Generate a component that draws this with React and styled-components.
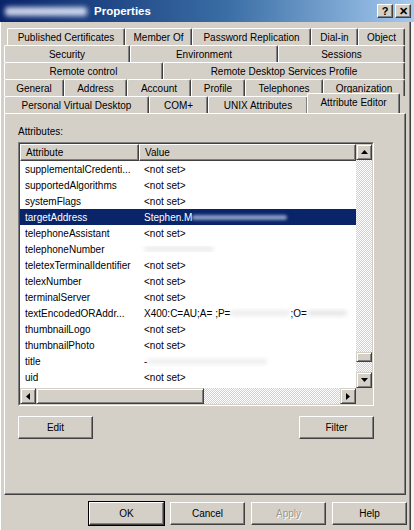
import React from 'react';
import styled, { createGlobalStyle } from 'styled-components';

const GlobalStyle = createGlobalStyle`
  html, body {
    margin: 0;
    padding: 0;
    background: #f4f3ef;
  }
  body {
    font-family: 'Liberation Sans', Arial, sans-serif;
    font-size: 10px;
    color: #000;
  }
`;

const Frame = styled.div`
  width: 414px;
  height: 530px;
  display: flex;
  flex-direction: column;
  overflow: hidden;
`;

const TitleBar = styled.div`
  height: 22px;
  flex: none;
  display: flex;
  align-items: center;
  padding: 0 3px 0 5px;
  background: linear-gradient(to right, #0a246a 0%, #3a6ea5 55%, #a6caf0 100%);
  color: #fff;
`;

const Smudge = styled.span`
  display: inline-block;
  width: ${(p) => p.w}px;
  height: ${(p) => p.h || 8}px;
  background: ${(p) => p.tone || 'rgba(255,255,255,0.75)'};
  filter: blur(${(p) => p.blur || 2}px);
  vertical-align: middle;
  border-radius: 3px;
`;

const TitleText = styled.span`
  font-size: 11.5px;
  font-weight: bold;
  margin-left: 7px;
  flex: 1;
`;

const CaptionButton = styled.div`
  width: 16px;
  height: 14px;
  box-sizing: border-box;
  background: #d4d0c8;
  border: 1px solid;
  border-color: #fff #404040 #404040 #fff;
  box-shadow: inset -1px -1px 0 #808080;
  color: #000;
  font-weight: bold;
  font-size: 11px;
  line-height: 12px;
  text-align: center;
  margin-left: ${(p) => (p.gap ? 2 : 0)}px;
`;

const Body = styled.div`
  flex: 1;
  width: 411px;
  box-sizing: border-box;
  background: #d4d0c8;
  border-right: 1px solid #404040;
  box-shadow: inset -1px 0 0 #808080, inset 1px 0 0 #fff;
  display: flex;
  flex-direction: column;
  padding: 6px 0 0 0;
`;

const TabStrip = styled.div`
  display: flex;
  flex-direction: column;
  padding: 0 4px;
  position: relative;
  z-index: 1;
`;

const TabRow = styled.div`
  display: flex;
  height: 17px;
  padding-left: ${(p) => p.indent || 0}px;
`;

const Tab = styled.div`
  width: ${(p) => p.w}px;
  flex: none;
  box-sizing: border-box;
  height: ${(p) => (p.active ? 20 : 17)}px;
  margin-top: ${(p) => (p.active ? -3 : 0)}px;
  margin-left: ${(p) => (p.active ? -1 : 0)}px;
  border-top: 1px solid #fff;
  border-left: 1px solid #fff;
  border-right: 1px solid #404040;
  box-shadow: inset -1px 0 0 #808080;
  border-radius: 2px 2px 0 0;
  background: #d4d0c8;
  display: flex;
  align-items: center;
  justify-content: center;
  white-space: nowrap;
  padding-bottom: ${(p) => (p.active ? 3 : 0)}px;
  position: relative;
  z-index: ${(p) => (p.active ? 2 : 0)};
`;

const Panel = styled.div`
  height: 382px;
  margin: 0 4px 0 4px;
  box-sizing: border-box;
  border: 1px solid;
  border-color: #fff #404040 #404040 #fff;
  box-shadow: inset -1px -1px 0 #808080;
  padding: 12px 0 0 13px;
  display: flex;
  flex-direction: column;
`;

const Label = styled.div`
  height: 13px;
  margin-bottom: 3px;
`;

const ListBox = styled.div`
  width: 356px;
  height: 264px;
  box-sizing: border-box;
  border: 1px solid;
  border-color: #808080 #fff #fff #808080;
  display: flex;
`;

const ListInner = styled.div`
  flex: 1;
  border: 1px solid;
  border-color: #404040 #d4d0c8 #d4d0c8 #404040;
  background: #fff;
  display: grid;
  grid-template-columns: 1fr 16px;
  grid-template-rows: 1fr 16px;
  overflow: hidden;
`;

const Content = styled.div`
  overflow: hidden;
  display: flex;
  flex-direction: column;
`;

const HeaderRow = styled.div`
  display: flex;
  height: 17px;
  flex: none;
`;

const HeaderCell = styled.div`
  width: ${(p) => (p.w ? `${p.w}px` : 'auto')};
  flex: ${(p) => (p.w ? 'none' : 1)};
  box-sizing: border-box;
  background: #d4d0c8;
  border: 1px solid;
  border-color: #fff #404040 #404040 #fff;
  box-shadow: inset -1px -1px 0 #808080;
  padding-left: 5px;
  display: flex;
  align-items: center;
`;

const Row = styled.div`
  display: flex;
  height: 16px;
  flex: none;
  align-items: center;
  background: ${(p) => (p.selected ? '#0a246a' : 'transparent')};
  color: ${(p) => (p.selected ? '#fff' : '#000')};
  white-space: nowrap;
`;

const Cell = styled.div`
  width: ${(p) => (p.w ? `${p.w}px` : 'auto')};
  flex: ${(p) => (p.w ? 'none' : 1)};
  padding-left: 5px;
  box-sizing: border-box;
  overflow: hidden;
  display: flex;
  align-items: center;
`;

const Track = styled.div`
  display: flex;
  flex-direction: ${(p) => (p.vertical ? 'column' : 'row')};
  background-color: #eeece7;
  background-image: repeating-conic-gradient(#d4d0c8 0 25%, #fff 0 50%);
  background-size: 2px 2px;
`;

const Corner = styled.div`
  background: #d4d0c8;
`;

const ScrollButton = styled.div`
  width: 16px;
  height: 16px;
  flex: none;
  box-sizing: border-box;
  background: #d4d0c8;
  border: 1px solid;
  border-color: #d4d0c8 #404040 #404040 #d4d0c8;
  box-shadow: inset 1px 1px 0 #fff, inset -1px -1px 0 #808080;
  display: flex;
  align-items: center;
  justify-content: center;
`;

const Thumb = styled(ScrollButton)`
  width: ${(p) => (p.horizontal ? `${p.size}px` : '16px')};
  height: ${(p) => (p.horizontal ? '16px' : `${p.size}px`)};
`;

const Spacer = styled.div`
  flex: ${(p) => p.grow || 1};
`;

const ButtonRow = styled.div`
  width: 356px;
  display: flex;
  justify-content: space-between;
  margin-top: 10px;
`;

const Button = styled.div`
  width: 75px;
  height: 23px;
  box-sizing: border-box;
  background: #d4d0c8;
  border: 1px solid;
  border-color: #fff #404040 #404040 #fff;
  box-shadow: inset -1px -1px 0 #808080;
  display: flex;
  align-items: center;
  justify-content: center;
  color: ${(p) => (p.disabled ? '#9a9890' : '#000')};
  text-shadow: ${(p) => (p.disabled ? '1px 1px 0 #fff' : 'none')};
  outline: ${(p) => (p.primary ? '1px solid #000' : 'none')};
`;

const Footer = styled.div`
  display: flex;
  justify-content: flex-end;
  gap: 6px;
  padding: 7px 3px 0 0;
`;

const Arrow = ({ dir }) => {
  const pts = {
    up: '0,4 3.5,0 7,4',
    down: '0,0 7,0 3.5,4',
    left: '4,0 4,7 0,3.5',
    right: '0,0 4,3.5 0,7',
  }[dir];
  const vertical = dir === 'up' || dir === 'down';
  return (
    <svg width={vertical ? 7 : 4} height={vertical ? 4 : 7} viewBox={vertical ? '0 0 7 4' : '0 0 4 7'}>
      <polygon points={pts} fill="#000" />
    </svg>
  );
};

const tabRows = [
  {
    indent: 3,
    tabs: [
      ['Published Certificates', 118],
      ['Member Of', 67],
      ['Password Replication', 119],
      ['Dial-in', 47],
      ['Object', 47],
    ],
  },
  {
    tabs: [
      ['Security', 126],
      ['Environment', 148],
      ['Sessions', 127],
    ],
  },
  {
    tabs: [
      ['Remote control', 159],
      ['Remote Desktop Services Profile', 242],
    ],
  },
  {
    tabs: [
      ['General', 60],
      ['Address', 63],
      ['Account', 64],
      ['Profile', 54],
      ['Telephones', 78],
      ['Organization', 82],
    ],
  },
  {
    tabs: [
      ['Personal Virtual Desktop', 145],
      ['COM+', 59],
      ['UNIX Attributes', 100],
      ['Attribute Editor', 93, true],
    ],
  },
];

const notSet = '<not set>';

const rows = [
  { name: 'supplementalCredenti...', value: notSet },
  { name: 'supportedAlgorithms', value: notSet },
  { name: 'systemFlags', value: notSet },
  {
    name: 'targetAddress',
    selected: true,
    value: (
      <>
        Stephen.M<Smudge w={95} h={5} tone="rgba(190,205,235,0.7)" blur={1.5} />
      </>
    ),
  },
  { name: 'telephoneAssistant', value: notSet },
  { name: 'telephoneNumber', value: <Smudge w={70} h={6} tone="rgba(225,225,225,0.6)" /> },
  { name: 'teletexTerminalIdentifier', value: notSet },
  { name: 'telexNumber', value: notSet },
  { name: 'terminalServer', value: notSet },
  {
    name: 'textEncodedORAddr...',
    value: (
      <>
        X400:C=AU;A= ;P=<Smudge w={60} h={6} tone="rgba(220,220,220,0.5)" />;O=
        <Smudge w={40} h={6} tone="rgba(215,215,215,0.6)" />
      </>
    ),
  },
  { name: 'thumbnailLogo', value: notSet },
  { name: 'thumbnailPhoto', value: notSet },
  {
    name: 'title',
    value: (
      <>
        -<Smudge w={120} h={5} tone="rgba(220,220,220,0.55)" />
      </>
    ),
  },
  { name: 'uid', value: notSet },
];

export default function App() {
  return (
    <>
      <GlobalStyle />
      <Frame>
        <TitleBar>
          <Smudge w={82} h={9} tone="rgba(235,240,255,0.85)" blur={2.5} />
          <TitleText>Properties</TitleText>
          <CaptionButton>?</CaptionButton>
          <CaptionButton gap>✕</CaptionButton>
        </TitleBar>
        <Body>
          <TabStrip>
            {tabRows.map((row, i) => (
              <TabRow key={i} indent={row.indent}>
                {row.tabs.map(([label, w, active]) => (
                  <Tab key={label} w={w} active={active}>
                    {label}
                  </Tab>
                ))}
              </TabRow>
            ))}
          </TabStrip>
          <Panel>
            <Label>Attributes:</Label>
            <ListBox>
              <ListInner>
                <Content>
                  <HeaderRow>
                    <HeaderCell w={119}>Attribute</HeaderCell>
                    <HeaderCell>Value</HeaderCell>
                  </HeaderRow>
                  {rows.map((r) => (
                    <Row key={r.name} selected={r.selected}>
                      <Cell w={119}>{r.name}</Cell>
                      <Cell>{r.value}</Cell>
                    </Row>
                  ))}
                </Content>
                <Track vertical>
                  <ScrollButton>
                    <Arrow dir="up" />
                  </ScrollButton>
                  <Spacer grow={194} />
                  <Thumb size={10} />
                  <Spacer grow={10} />
                  <ScrollButton>
                    <Arrow dir="down" />
                  </ScrollButton>
                </Track>
                <Track>
                  <ScrollButton>
                    <Arrow dir="left" />
                  </ScrollButton>
                  <Thumb horizontal size={168} />
                  <Spacer />
                  <ScrollButton>
                    <Arrow dir="right" />
                  </ScrollButton>
                </Track>
                <Corner />
              </ListInner>
            </ListBox>
            <ButtonRow>
              <Button>Edit</Button>
              <Button>Filter</Button>
            </ButtonRow>
          </Panel>
          <Footer>
            <Button primary>OK</Button>
            <Button>Cancel</Button>
            <Button disabled>Apply</Button>
            <Button>Help</Button>
          </Footer>
        </Body>
      </Frame>
    </>
  );
}
